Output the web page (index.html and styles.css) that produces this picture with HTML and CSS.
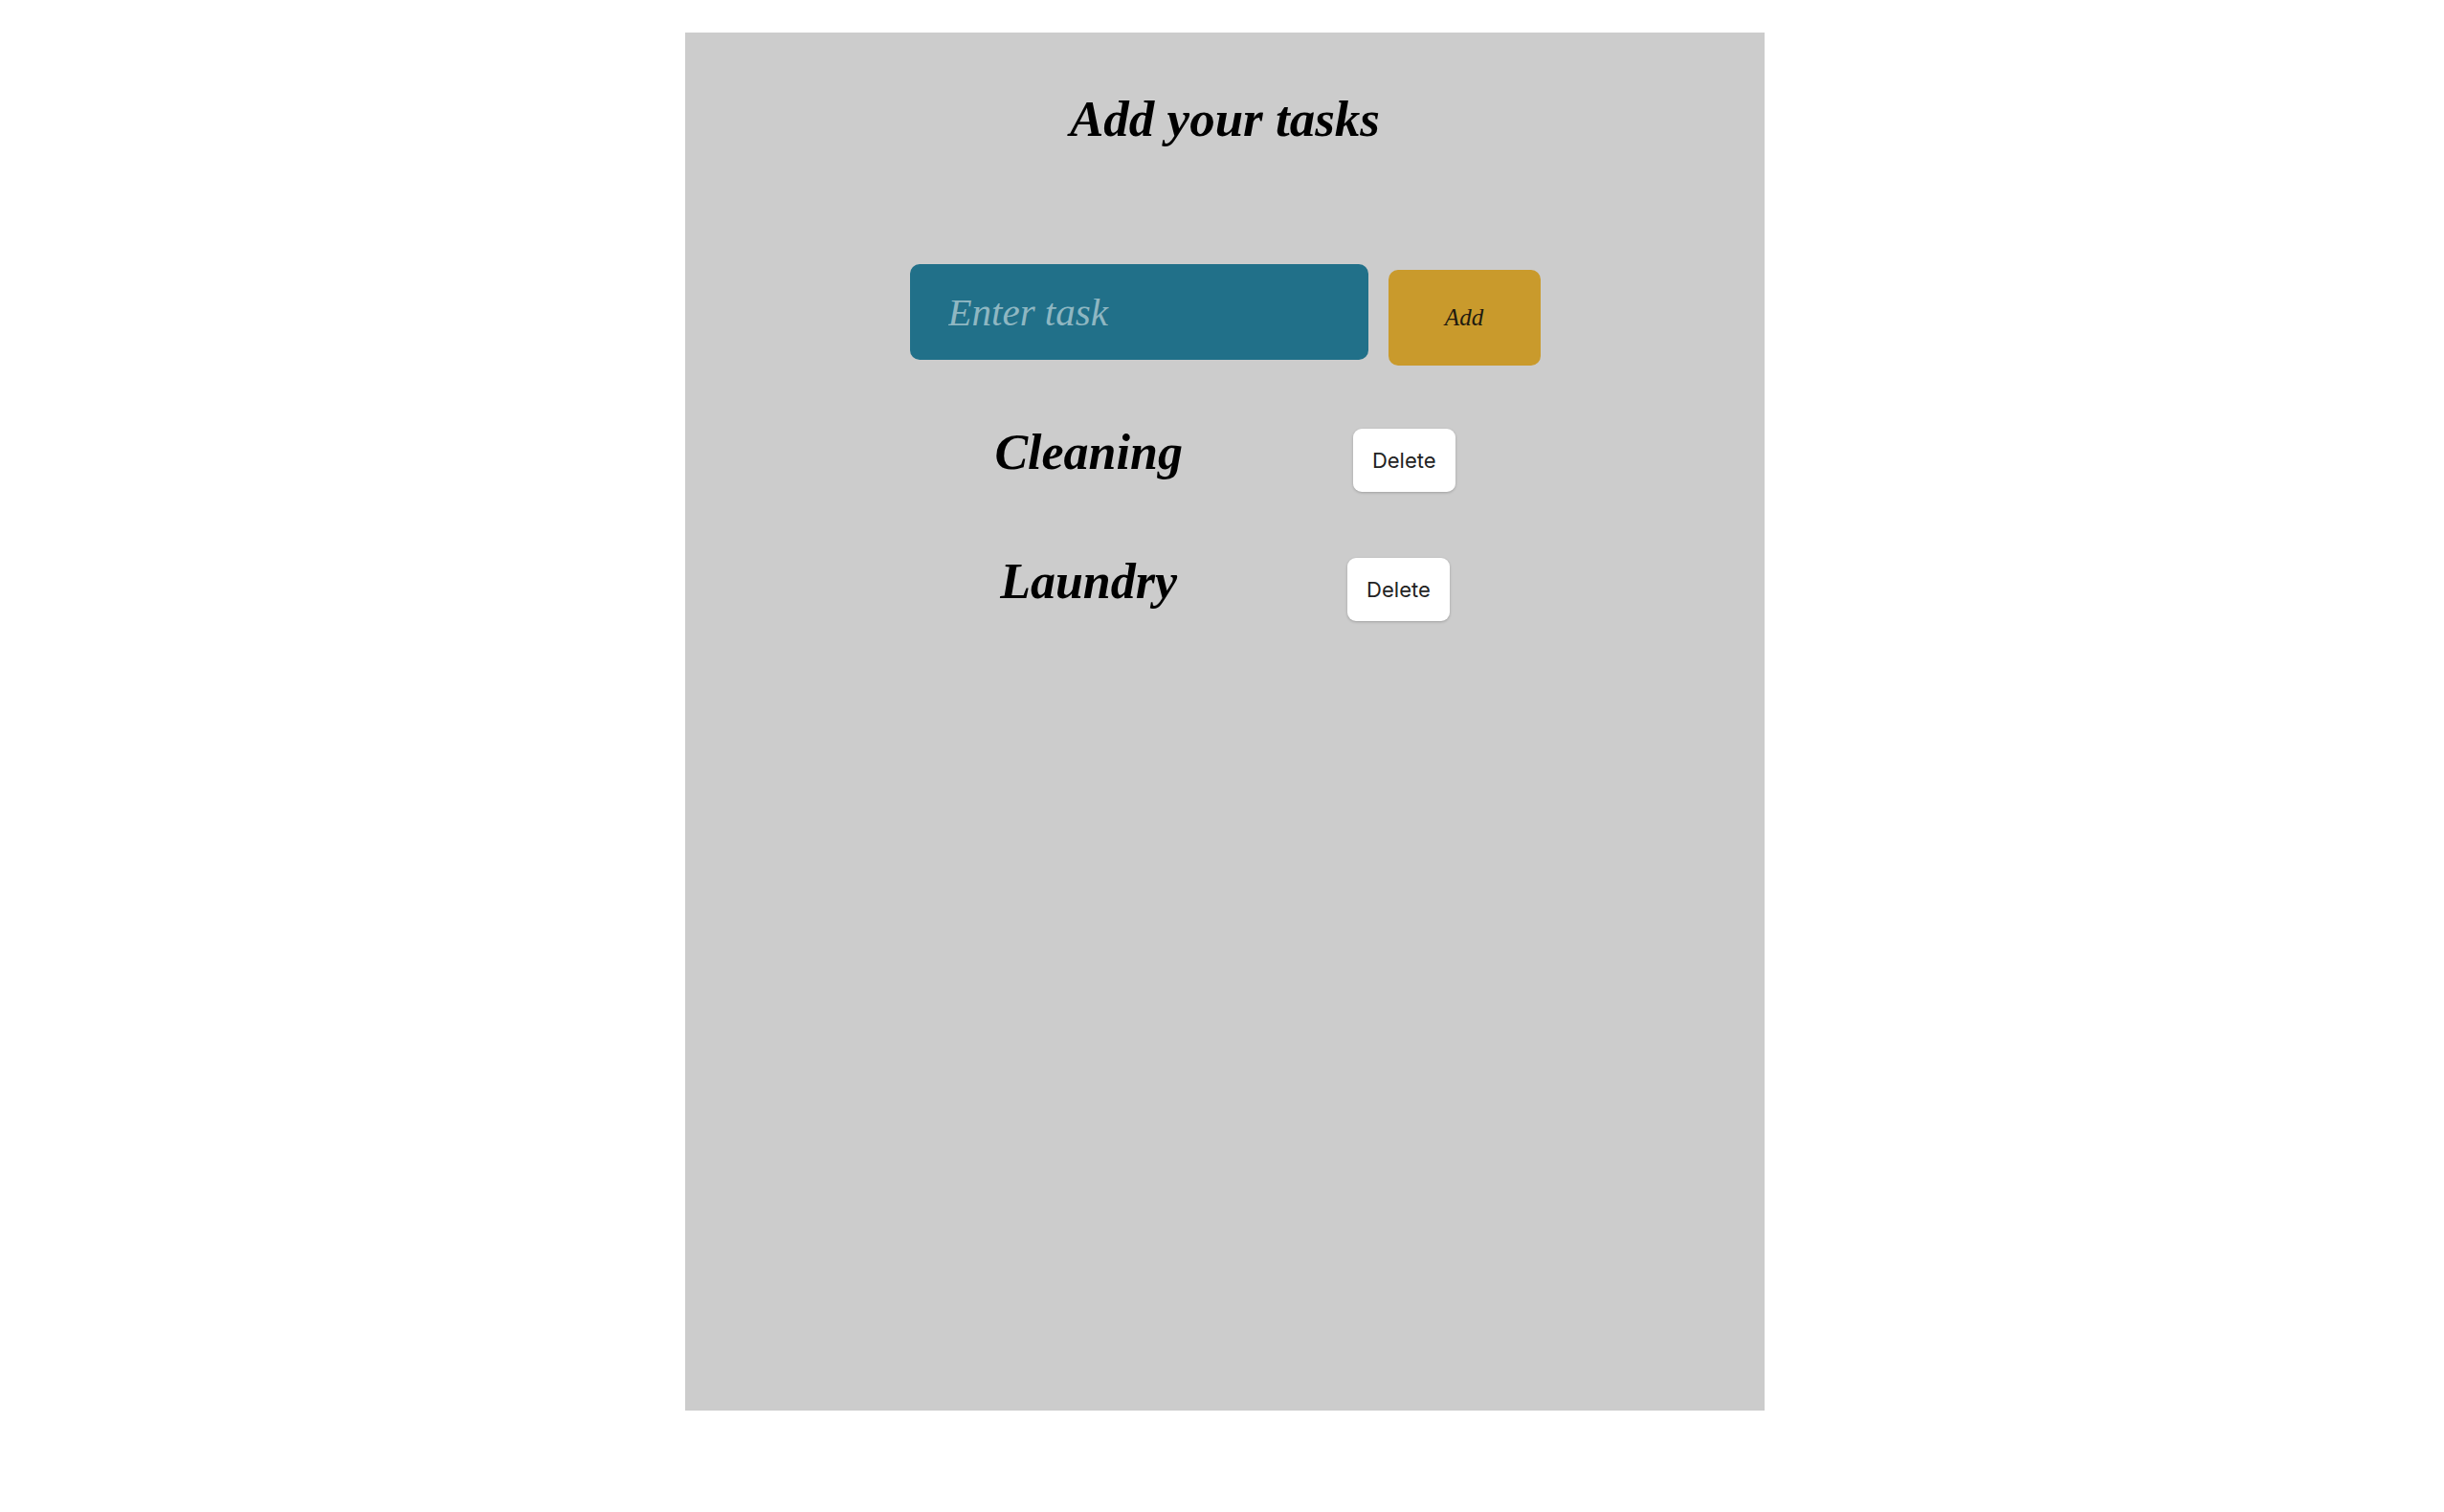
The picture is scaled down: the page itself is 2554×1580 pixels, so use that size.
FILE: index.html
```html
<!DOCTYPE html>
<html lang="en">
<head>
<meta charset="utf-8">
<title>Add your tasks</title>
<link rel="stylesheet" href="styles.css">
</head>
<body>
<main class="panel">
  <h1 class="title">Add your tasks</h1>
  <form class="add-form">
    <input class="task-input" type="text" placeholder="Enter task">
    <button class="add-btn" type="button">Add</button>
  </form>
  <ul class="task-list">
    <li class="task-row">
      <span class="task-name">Cleaning</span>
      <button class="delete-btn" type="button">Delete</button>
    </li>
    <li class="task-row">
      <span class="task-name">Laundry</span>
      <button class="delete-btn" type="button">Delete</button>
    </li>
  </ul>
</main>
</body>
</html>
```
FILE: styles.css
```css
html, body {
  margin: 0;
  padding: 0;
  background: #ffffff;
}

body {
  font-family: "Liberation Serif", "Times New Roman", serif;
}

.panel {
  width: 1128px;
  height: 1440px;
  margin: 34px 0 0 716px;
  background: #cccccc;
  display: flex;
  flex-direction: column;
  align-items: center;
  padding-top: 60px;
  box-sizing: border-box;
}

.title {
  margin: 0;
  font-size: 53px;
  line-height: 60px;
  font-style: italic;
  font-weight: bold;
  color: #000;
}

.add-form {
  margin: 122px 0 0 0;
  display: flex;
  align-items: flex-start;
  gap: 21px;
}

.task-input {
  width: 479px;
  height: 100px;
  box-sizing: border-box;
  border: none;
  border-radius: 10px;
  background: #217089;
  padding: 0 0 0 40px;
  font-family: "Liberation Serif", "Times New Roman", serif;
  font-style: italic;
  font-size: 41px;
  color: #e8f1f3;
  outline: none;
}

.task-input::placeholder {
  color: #8fb7c2;
  opacity: 1;
}

.add-btn {
  margin-top: 6px;
  width: 159px;
  height: 100px;
  border: none;
  border-radius: 10px;
  background: #c99a2c;
  font-family: "Liberation Serif", "Times New Roman", serif;
  font-style: italic;
  font-size: 25px;
  color: #1f1a10;
  padding: 0;
}

.task-list {
  list-style: none;
  margin: 59px 0 0 0;
  padding: 0;
  display: flex;
  flex-direction: column;
  align-items: center;
  gap: 62px;
}

.task-row {
  display: flex;
  align-items: flex-start;
  gap: 178px;
}

.task-name {
  padding-top: 2px;
  font-size: 52px;
  line-height: 60px;
  font-style: italic;
  font-weight: bold;
  color: #000;
}

.delete-btn {
  margin-top: 7px;
  height: 66px;
  padding: 0 20px;
  border: none;
  border-radius: 9px;
  background: #ffffff;
  box-shadow: 0 1px 3px rgba(0, 0, 0, 0.22);
  font-family: Inter, "Noto Sans", sans-serif;
  font-size: 22px;
  color: #222222;
}
```
